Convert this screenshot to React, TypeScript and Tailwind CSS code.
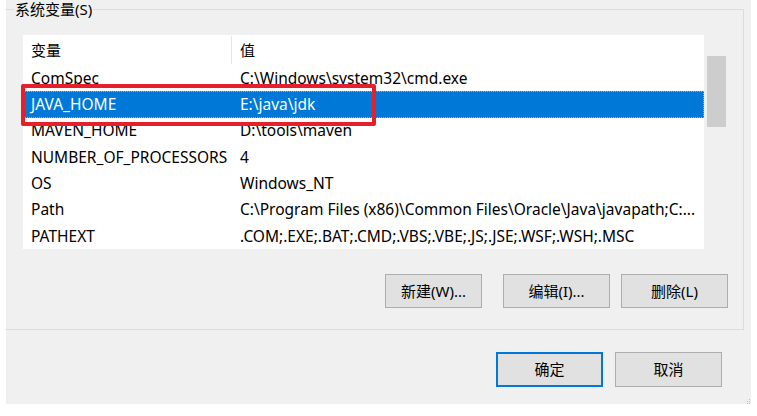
import React from 'react';

const rows = [
  { name: 'ComSpec', value: 'C:\\Windows\\system32\\cmd.exe' },
  { name: 'JAVA_HOME', value: 'E:\\java\\jdk', selected: true },
  { name: 'MAVEN_HOME', value: 'D:\\tools\\maven' },
  { name: 'NUMBER_OF_PROCESSORS', value: '4' },
  { name: 'OS', value: 'Windows_NT' },
  { name: 'Path', value: 'C:\\Program Files (x86)\\Common Files\\Oracle\\Java\\javapath;C:...' },
  { name: 'PATHEXT', value: '.COM;.EXE;.BAT;.CMD;.VBS;.VBE;.JS;.JSE;.WSF;.WSH;.MSC' },
];

const btn = "h-[34px] bg-[#e1e1e1] border border-[#adadad] text-[15px] text-black flex items-center justify-center";

const App = () => {
  return (
    <div className="w-[757px] h-[416px] bg-white text-black text-[15px] font-['Noto_Sans','Noto_Sans_CJK_SC',sans-serif]">
      <div className="ml-[6px] w-[745px] h-[404px] bg-[#f0f0f0] flex flex-col relative">
        {/* 系统变量 group */}
        <fieldset className="w-[738px] h-[330px] border-t border-r border-b border-[#dcdcdc] m-0 p-0 flex flex-col">
          <legend className="ml-[8px] px-[1px] h-[18px] leading-[18px]">系统变量(S)</legend>

          <div className="flex mt-[17px] ml-[17px]">
            <div className="relative w-[681px] h-[214px] bg-white">
              <div className="flex h-[30px] items-center">
                <div className="w-[209px] h-[28px] pl-[8px] flex items-center border-r border-[#e5e5e5]">变量</div>
                <div className="pl-[8px]">值</div>
              </div>
              {rows.map((r) => (
                <div
                  key={r.name}
                  className={
                    r.selected
                      ? "flex h-[26.33px] items-center text-[15.5px] bg-[#0078d7] text-white border border-dotted border-[#e0a060]"
                      : "flex h-[26.33px] items-center text-[15.5px] border border-transparent"
                  }
                >
                  <div className="w-[209px] pl-[7px] whitespace-nowrap">{r.name}</div>
                  <div className="pl-[7px] whitespace-nowrap">{r.value}</div>
                </div>
              ))}
              {/* red highlight */}
              <div className="absolute left-[-2px] top-[49px] w-[355px] h-[42px] border-[4px] border-[#e5202b] rounded-[2px]" />
            </div>
            {/* scrollbar */}
            <div className="w-[23px] h-[214px] pl-[3px] pt-[21px]">
              <div className="w-[19px] h-[71px] bg-[#cdcdcd]" />
            </div>
          </div>

          <div className="flex justify-end pr-[15px] mt-[25px]">
            <button className={btn + " w-[97px]"}>新建(W)...</button>
            <button className={btn + " w-[107px] ml-[21px]"}>编辑(I)...</button>
            <button className={btn + " w-[107px] ml-[11px]"}>删除(L)</button>
          </div>
        </fieldset>

        <div className="flex justify-end pr-[29px] mt-[22px]">
          <button className="w-[107px] h-[35px] bg-[#e1e1e1] border-2 border-[#0078d7] flex items-center justify-center">确定</button>
          <button className="w-[107px] h-[35px] bg-[#e1e1e1] border border-[#adadad] ml-[12px] flex items-center justify-center">取消</button>
        </div>

        {/* resize grip */}
        <svg className="absolute right-0 bottom-0" width="5" height="5" viewBox="0 0 5 5">
          <rect x="3" y="0" width="1" height="1" fill="#bcbcbc" />
          <rect x="1" y="2" width="1" height="1" fill="#bcbcbc" />
          <rect x="3" y="2" width="1" height="1" fill="#bcbcbc" />
          <rect x="3" y="4" width="1" height="1" fill="#bcbcbc" />
          <rect x="1" y="4" width="1" height="1" fill="#bcbcbc" />
        </svg>
      </div>
    </div>
  );
};

export default App;
